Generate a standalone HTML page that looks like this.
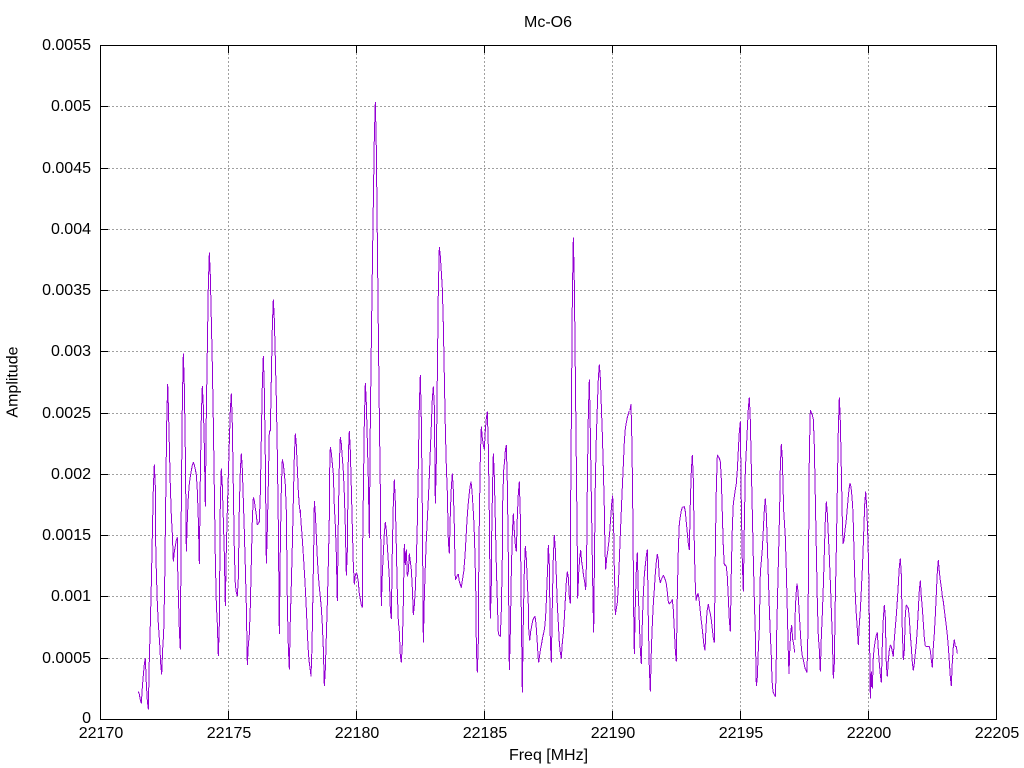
<!DOCTYPE html>
<html><head><meta charset="utf-8"><title>Mc-O6</title>
<style>html,body{margin:0;padding:0;background:#fff;width:1024px;height:768px;overflow:hidden}svg{display:block}text{font-family:"Liberation Sans",sans-serif;font-size:16px;fill:#000}</style>
</head><body>
<svg width="1024" height="768" viewBox="0 0 1024 768" xmlns="http://www.w3.org/2000/svg">
<rect width="1024" height="768" fill="#fff"/>
<g stroke="#a0a0a0" stroke-width="1" stroke-dasharray="2 2" shape-rendering="crispEdges" fill="none">
<path d="M100 658.5H996M100 596.5H996M100 535.5H996M100 474.5H996M100 413.5H996M100 351.5H996M100 290.5H996M100 229.5H996M100 168.5H996M100 106.5H996"/>
<path d="M228.5 45V719M356.5 45V719M484.5 45V719M612.5 45V719M740.5 45V719M868.5 45V719"/>
</g>
<g stroke="#000" stroke-width="1" shape-rendering="crispEdges" fill="none">
<path d="M100 658.5h8M100 596.5h8M100 535.5h8M100 474.5h8M100 413.5h8M100 351.5h8M100 290.5h8M100 229.5h8M100 168.5h8M100 106.5h8"/>
<path d="M996 658.5h-8M996 596.5h-8M996 535.5h-8M996 474.5h-8M996 413.5h-8M996 351.5h-8M996 290.5h-8M996 229.5h-8M996 168.5h-8M996 106.5h-8"/>
<path d="M228.5 719v-8M356.5 719v-8M484.5 719v-8M612.5 719v-8M740.5 719v-8M868.5 719v-8"/>
<path d="M228.5 45v8M356.5 45v8M484.5 45v8M612.5 45v8M740.5 45v8M868.5 45v8"/>
</g>
<g fill="none" stroke="#9400d3" stroke-width="1" stroke-linejoin="bevel" shape-rendering="crispEdges">
<polyline vector-effect="non-scaling-stroke" transform="translate(130,230) scale(.33333)" points="25,1385 28,1393 31,1410 34,1420 37,1372 40,1335 43,1303 46,1285 49,1362 52,1412 55,1438 58,1285 61,1182 64,1060 67,915 70,775 73,703 76,770 76,895 79,1025 82,1120 85,1182 89,1240 92,1300 95,1333 98,1257 101,1210 104,1062 107,822 110,582 113,462 115,525 118,645 121,768 124,858 127,912 130,995 133,965 136,948 139,930 142,922 142,978 145,1088 148,1200 151,1258 154,812 157,520 160,370 163,468 166,665 169,965 172,868 175,800 178,760 181,740 184,722 187,705 190,697 193,705 196,718 199,735 202,782 205,870 208,1002 211,735 214,558 217,468 220,528 223,648 226,830 229,545 232,355 235,165 238,68 241,138 244,270 247,405 250,575 253,780 256,988 259,1122 262,1182 265,1278 268,1182 271,810 274,715 277,768 280,870 283,972 286,1128 289,955 292,840 295,735 298,635 301,540 304,490 307,585 310,775 313,962 316,1065 319,1088 322,1098 325,1045 328,830 331,722 334,670 337,718 340,810 343,905 346,1012 349,1128 352,1305 355,1245 358,1212 361,1128 364,995 367,868 370,802 373,812 376,835 379,855 382,885 385,880 388,875 391,788 394,622 397,462 400,378 403,482 406,690 409,1000 412,898 415,760 418,602 421,603 424,445 427,288 430,208 433,268 436,385 439,505 442,670 445,885 448,1212 451,948 454,775 457,688 460,702 463,732 466,765 469,845 472,1118 475,1250 478,1318 481,1165 484,1062 487,945 490,810 493,678 496,610 499,645 502,715 505,785 508,828 511,850"/>
<polyline vector-effect="non-scaling-stroke" transform="translate(295,95) scale(.33333,.3954)" points="16,1050 18,1080 21,1112 24,1150 27,1190 30,1232 33,1282 36,1338 39,1395 42,1430 45,1448 48,1470 51,1395 54,1250 57,1103 58,1027 61,1058 64,1115 67,1172 70,1215 73,1245 76,1270 79,1297 82,1340 85,1400 88,1495 91,1452 94,1368 97,1285 100,1185 103,1067 104,950 106,890 109,905 112,932 115,958 118,1040 121,1088 124,1162 127,1280 130,1072 133,935 136,865 139,882 142,918 145,952 148,1010 151,1092 154,1215 157,1152 160,910 163,850 166,900 169,995 172,1092 175,1188 178,1238 181,1215 184,1208 187,1215 190,1232 193,1262 196,1275 199,1290 202,1296 202,1200 205,1012 208,825 211,728 214,780 217,875 220,972 223,1120 226,822 229,625 232,440 235,272 238,105 241,18 244,135 247,365 250,595 253,808 256,998 259,1292 262,1210 265,1160 268,1108 271,1080 274,1100 277,1140 280,1180 283,1222 286,1300 289,1325 292,1148 295,1032 298,972 301,1030 304,1143 307,1258 310,1330 313,1358 316,1418 319,1435 322,1388 325,1285 328,1135 331,1188 334,1150 337,1218 340,1205 343,1160 346,1180 349,1200 352,1248 355,1315 358,1290 361,1250 364,1178 367,1082 370,935 373,785 376,708 379,822 382,1048 385,1385 388,1270 391,1190 394,1125 397,1072 400,1022 403,965 406,898 409,835 412,768 415,737 418,788 421,1033 424,925 427,708 430,492 433,385 436,408 439,448 442,490 445,580 448,712 451,842 454,940 457,1005 460,1128 463,1160 466,1058 469,992 472,957 475,1000 478,1090 481,1226 484,1222 487,1215 490,1212 493,1230 496,1238 499,1246 502,1228 505,1212 508,1196"/>
<polyline vector-effect="non-scaling-stroke" transform="translate(460,230) scale(.33333)" points="12,1015 15,978 18,925 21,870 24,828 27,798 30,770 33,755 36,782 39,830 42,882 45,978 48,1115 49,1255 52,1328 55,1235 56,1050 58,868 61,682 64,590 67,625 70,645 73,658 76,600 79,565 82,545 85,650 88,855 91,1165 94,1060 95,918 98,752 100,670 103,740 106,872 109,1008 112,1112 115,1212 118,1216 121,1220 124,1140 127,978 128,820 131,722 134,692 136,662 139,645 142,760 145,982 148,1320 151,1205 154,1025 157,908 160,850 163,905 166,945 169,965 172,858 175,790 178,755 181,860 183,1070 187,1388 190,1168 193,1022 196,948 199,985 202,1055 205,1125 206,1195 209,1232 212,1205 215,1188 218,1172 221,1165 225,1158 228,1182 231,1225 234,1275 236,1298 239,1275 242,1255 245,1240 248,1222 252,1205 255,1185 258,1140 261,1062 264,985 265,945 268,1005 271,1235 274,1298 277,1120 280,980 283,915 286,958 289,1040 292,1125 295,1180 298,1238 301,1268 304,1285 307,1238 310,1210 313,1165 316,1108 319,1055 322,1025 325,1042 328,1100 331,1120 331,938 334,570 337,205 340,22 343,160 346,430 349,700 352,968 353,1105 356,1030 359,985 362,960 365,995 368,1015 371,1040 374,1055 377,1080 380,975 382,762 385,552 388,448 390,545 393,735 396,925 399,1112 401,1208 404,932 406,755 409,620 412,530 415,445 418,403 421,445 424,528 427,612 430,715 433,835 435,958 437,1018 440,985 443,965 446,940 449,908 452,865 455,822 458,797 461,885 462,975 465,1095 466,1155 469,1135 472,1118 475,1068 478,990 481,912 484,840 487,770 490,705 493,635 496,595 499,578 502,562 505,552 508,542"/>
<polyline vector-effect="non-scaling-stroke" transform="translate(625,390) scale(.33333)" points="15,60 18,42 21,168 24,415 26,665 28,792 31,640 34,538 37,487 40,612 43,697 46,780 49,822 52,695 55,612 58,555 61,525 64,497 67,478 70,692 73,835 76,905 79,782 82,702 85,640 88,598 91,550 94,515 97,492 100,510 103,565 106,578 109,568 112,562 115,556 118,562 121,570 124,582 127,607 130,635 133,642 136,638 139,634 142,628 145,660 148,720 151,782 154,815 157,612 160,478 163,400 166,380 169,362 172,352 175,351 178,350 181,365 184,398 187,430 190,462 193,480 196,335 199,242 202,195 205,270 207,415 210,558 213,632 216,620 219,610 222,625 225,655 228,685 231,710 234,738 237,768 240,782 243,712 246,665 250,642 253,660 256,672 259,690 262,718 265,745 268,758 271,478 274,292 277,195 280,200 283,205 286,215 289,268 292,372 295,472 298,525 301,525 304,530 307,560 310,625 313,690 316,725 319,538 322,412 325,340 328,320 331,298 334,280 337,240 340,180 343,125 346,95 349,348 352,518 355,605 358,405 361,242 364,178 367,115 370,55 373,22 376,92 379,232 382,368 385,508 388,630 391,732 394,888 397,862 400,778 403,715 406,548 412,478 415,418 418,360 421,325 424,372 427,465 430,560 433,655 436,735 439,800 441,870 444,905 447,912 451,920 453,858 455,732 458,605 461,480 464,352 466,228 469,162 472,205 476,362 481,442 484,542 487,665 490,790 492,852 494,788 497,728 500,705 503,748 506,762 509,788"/>
<polyline vector-effect="non-scaling-stroke" transform="translate(790,390) scale(.33333)" points="15,750 15,685 18,615 21,580 24,605 27,658 30,708 33,760 36,793 39,805 42,820 45,835 48,840 51,848 54,715 56,455 58,190 61,60 64,68 67,75 70,88 73,168 76,325 79,480 82,635 85,740 88,778 91,845 94,740 97,672 100,588 103,488 106,388 109,335 112,370 115,435 118,500 121,575 124,660 127,740 130,865 133,820 136,620 139,478 142,295 145,115 148,22 151,95 154,240 157,390 159,462 162,452 165,420 168,398 171,365 174,330 177,298 180,280 183,290 186,320 189,368 192,482 195,588 198,660 201,702 205,765 208,702 211,662 214,600 218,515 221,432 224,345 227,305 230,348 233,425 236,530 238,688 241,925 244,845 247,895 250,800 253,770 256,750 259,735 262,728 265,780 268,820 271,855 274,878 277,762 280,685 283,645 286,682 289,825 292,860 295,810 298,780 301,765 304,770 307,785 310,800 313,748 316,712 319,675 322,632 325,582 328,530 331,505 334,555 337,725 340,810 343,780 346,672 349,645 352,650 355,655 358,685 361,735 364,772 367,818 370,842 373,820 376,790 379,760 382,715 385,658 388,600 391,572 394,620 397,655 400,700 403,745 406,768 409,769 412,769 415,769 418,770 421,782 424,810 427,833 430,770 433,730 436,675 439,610 442,545 445,510 448,545 451,572 454,592 457,618 460,635 463,660 466,685 469,708 472,735 475,770 478,815 481,862 484,888 487,815 490,770 493,748 496,770 499,770 502,790"/>
</g>
<rect x="100.5" y="45.5" width="896" height="674" fill="none" stroke="#000" stroke-width="1" shape-rendering="crispEdges"/>
<g text-anchor="end">
<text x="91" y="723">0</text>
<text x="91" y="663">0.0005</text>
<text x="91" y="601">0.001</text>
<text x="91" y="540">0.0015</text>
<text x="91" y="479">0.002</text>
<text x="91" y="418">0.0025</text>
<text x="91" y="356">0.003</text>
<text x="91" y="295">0.0035</text>
<text x="91" y="234">0.004</text>
<text x="91" y="173">0.0045</text>
<text x="91" y="111">0.005</text>
<text x="91" y="50">0.0055</text>
</g>
<g text-anchor="middle">
<text x="101" y="738">22170</text>
<text x="229" y="738">22175</text>
<text x="357" y="738">22180</text>
<text x="485" y="738">22185</text>
<text x="613" y="738">22190</text>
<text x="741" y="738">22195</text>
<text x="869" y="738">22200</text>
<text x="997" y="738">22205</text>
<text x="548" y="27">Mc-O6</text>
<text x="548.5" y="760">Freq [MHz]</text>
<text transform="translate(17.5,382) rotate(-90)">Amplitude</text>
</g>
</svg>
</body></html>
